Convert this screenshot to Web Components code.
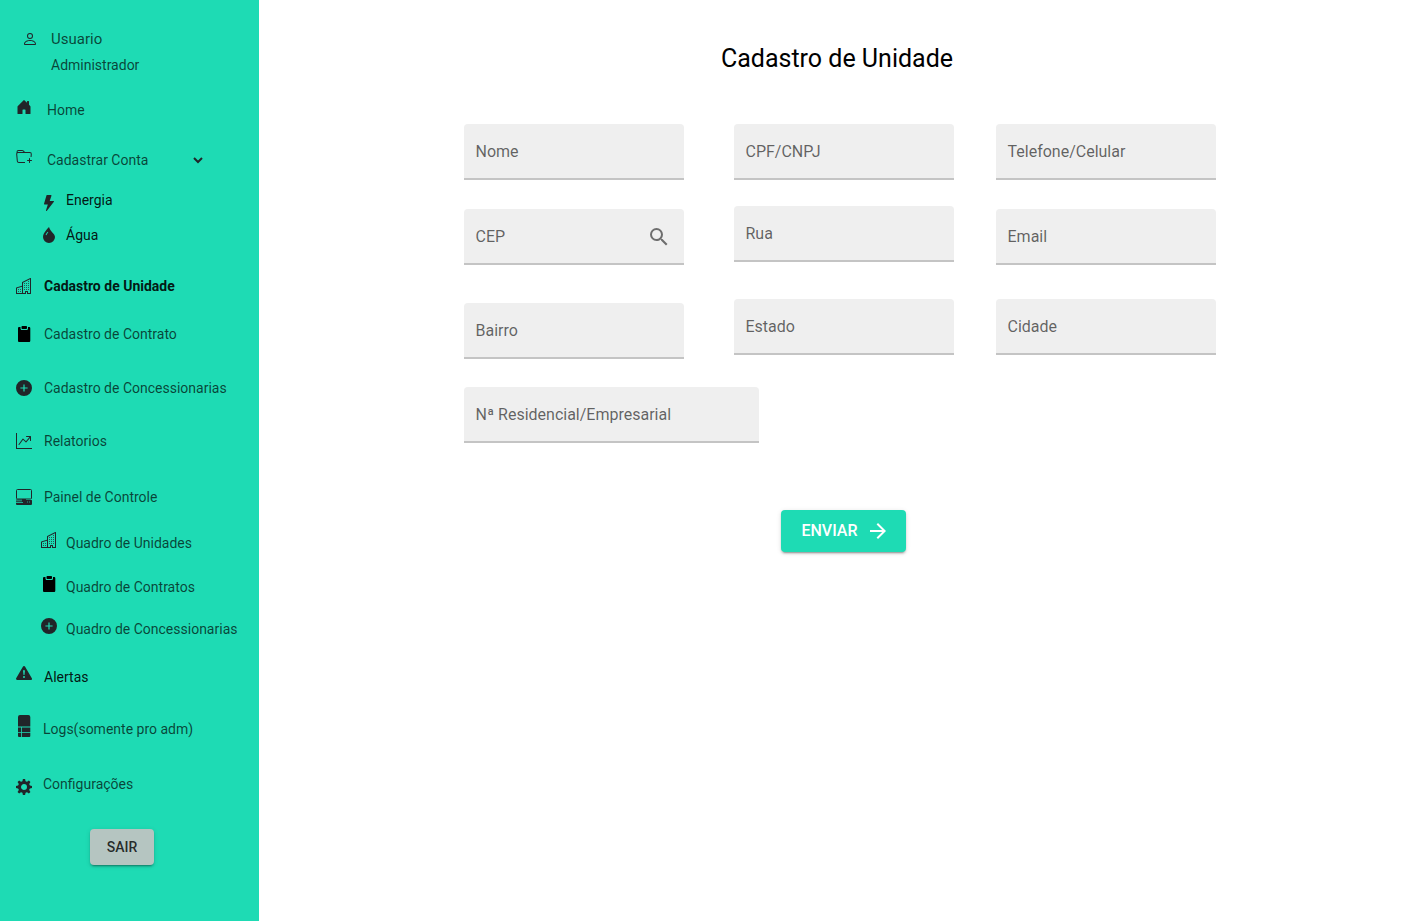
<!DOCTYPE html>
<html lang="pt-BR">
<head>
<meta charset="utf-8">
<title>Cadastro de Unidade</title>
<style>
  body { margin: 0; background: #fff; font-family: Roboto, "Liberation Sans", sans-serif; }
</style>
</head>
<body>
<app-shell>
  <side-bar slot="side">
    <user-card name="Usuario" role-name="Administrador"></user-card>
    <nav-item icon="home" align="start" space="23" indent="15">Home</nav-item>
    <nav-item icon="folder" align="start" space="28" indent="15" expandable>Cadastrar Conta</nav-item>
    <nav-item icon="bolt" align="end" space="18" tone="dark" sub>Energia</nav-item>
    <nav-item icon="drop" space="13" tone="dark" sub>Água</nav-item>
    <nav-item icon="building" space="29" tone="dark" current>Cadastro de Unidade</nav-item>
    <nav-item icon="clipboard" space="26">Cadastro de Contrato</nav-item>
    <nav-item icon="plus" space="32">Cadastro de Concessionarias</nav-item>
    <nav-item icon="chart" space="31">Relatorios</nav-item>
    <nav-item icon="panel" space="34">Painel de Controle</nav-item>
    <nav-item icon="building" align="start" space="24" sub>Quadro de Unidades</nav-item>
    <nav-item icon="clipboard" align="start" space="22" sub>Quadro de Contratos</nav-item>
    <nav-item icon="plus" align="start" space="20" sub>Quadro de Concessionarias</nav-item>
    <nav-item icon="alert" align="start" space="26" tone="dark">Alertas</nav-item>
    <nav-item icon="server" space="30" indent="11">Logs(somente pro adm)</nav-item>
    <nav-item icon="gear" align="end" space="33" indent="11">Configurações</nav-item>
    <app-button slot="footer" variant="neutral">SAIR</app-button>
  </side-bar>
  <unit-form></unit-form>
</app-shell>

<script>
const ICONS = {
  user: ['<path d="M8 8a3 3 0 1 0 0-6 3 3 0 0 0 0 6Zm2-3a2 2 0 1 1-4 0 2 2 0 0 1 4 0Zm4 8c0 1-1 1-1 1H3s-1 0-1-1 1-4 6-4 6 3 6 4Zm-1-.004c-.001-.246-.154-.986-.832-1.664C11.516 10.68 10.289 10 8 10c-2.29 0-3.516.68-4.168 1.332-.678.678-.83 1.418-.832 1.664h10Z"/>'],
  home: ['<path d="M6.5 14.5v-3.505c0-.245.25-.495.5-.495h2c.25 0 .5.25.5.5v3.5a.5.5 0 0 0 .5.5h4a.5.5 0 0 0 .5-.5v-7a.5.5 0 0 0-.146-.354L13 5.793V2.5a.5.5 0 0 0-.5-.5h-1a.5.5 0 0 0-.5.5v1.293L8.354 1.146a.5.5 0 0 0-.708 0l-6 6A.5.5 0 0 0 1.5 7.5v7a.5.5 0 0 0 .5.5h4a.5.5 0 0 0 .5-.5z"/>'],
  folder: ['<path d="m.5 3 .04.87a1.99 1.99 0 0 0-.342 1.311l.637 7A2 2 0 0 0 2.826 14H9v-1H2.826a1 1 0 0 1-.995-.91l-.637-7A1 1 0 0 1 2.19 4h11.62a1 1 0 0 1 .996 1.09L14.54 8h1.005l.256-2.819A2 2 0 0 0 13.81 3H9.828a2 2 0 0 1-1.414-.586l-.828-.828A2 2 0 0 0 6.172 1H2.5a2 2 0 0 0-2 2Zm5.672-1a1 1 0 0 1 .707.293L7.586 3H2.19c-.24 0-.47.042-.683.12L1.5 2.98a1 1 0 0 1 1-.98h3.672ZM13.5 9a.5.5 0 0 1 .5.5V11h1.5a.5.5 0 1 1 0 1H14v1.5a.5.5 0 1 1-1 0V12h-1.5a.5.5 0 0 1 0-1H13V9.5a.5.5 0 0 1 .5-.5z"/>'],
  bolt: ['<path d="M5.52.359A.5.5 0 0 1 6 0h4a.5.5 0 0 1 .474.658L8.694 6H12.5a.5.5 0 0 1 .395.807l-7 9a.5.5 0 0 1-.873-.454L6.823 9.5H3.5a.5.5 0 0 1-.48-.641l2.5-8.5z"/>'],
  drop: ['<path fill-rule="evenodd" d="M8 16a6 6 0 0 0 6-6c0-1.655-1.122-2.904-2.432-4.362C10.254 4.176 8.75 2.503 8 0c0 0-6 5.686-6 10a6 6 0 0 0 6 6ZM6.646 4.646l.708.708c-.29.29-1.128 1.311-1.907 2.87l-.894-.448c.82-1.641 1.717-2.753 2.093-3.13Z"/>'],
  building: ['<path fill-rule="evenodd" d="M14.763.075A.5.5 0 0 1 15 .5v15a.5.5 0 0 1-.5.5h-3a.5.5 0 0 1-.5-.5V14h-1v1.5a.5.5 0 0 1-.5.5h-9a.5.5 0 0 1-.5-.5V10a.5.5 0 0 1 .342-.474L6 7.64V4.5a.5.5 0 0 1 .276-.447l8-4a.5.5 0 0 1 .487.022zM6 8.694 1 10.36V15h5V8.694zM7 15h2v-1.5a.5.5 0 0 1 .5-.5h2a.5.5 0 0 1 .5.5V15h2V1.309l-7 3.5V15z"/><path opacity=".7" d="M2 11h1v1H2v-1zm2 0h1v1H4v-1zm-2 2h1v1H2v-1zm2 0h1v1H4v-1zm4-4h1v1H8V9zm2 0h1v1h-1V9zm-2 2h1v1H8v-1zm2 0h1v1h-1v-1zm2-2h1v1h-1V9zm0 2h1v1h-1v-1zM8 7h1v1H8V7zm2 0h1v1h-1V7zm2 0h1v1h-1V7zM8 5h1v1H8V5zm2 0h1v1h-1V5zm2 0h1v1h-1V5zm0-2h1v1h-1V3z"/>'],
  clipboard: ['<path fill="#000" d="M6.500 0h3.500c.6 0 1 .4 1 1v1c0 .6-.4 1-1 1H6.500c-.6 0-1-.4-1-1V1c0-.6.4-1 1-1zM3.300 1h1.200v1.500C4.500 3.300 5 4 5.800 4h4.900c.8 0 1.300-.7 1.300-1.500V1h1c.8 0 1.300.5 1.300 1.300v12.400c0 .8-.5 1.300-1.300 1.300H3.300c-.8 0-1.300-.5-1.300-1.300V2.300C2 1.500 2.500 1 3.300 1z"/>'],
  plus: ['<path fill-rule="evenodd" d="M16 8A8 8 0 1 1 0 8a8 8 0 0 1 16 0zM8.600 4.400H7.400v3h-3v1.200h3v3h1.200v-3h3V7.400h-3z"/>'],
  chart: ['<path fill-rule="evenodd" d="M0 0h1v15h15v1H0V0Zm10 3.500a.5.5 0 0 1 .5-.5h4a.5.5 0 0 1 .5.5v4a.5.5 0 0 1-1 0V4.900l-3.613 4.417a.5.5 0 0 1-.74.037L7.060 6.767l-3.656 5.027a.5.5 0 0 1-.808-.588l4-5.500a.5.5 0 0 1 .758-.06l2.609 2.610L13.445 4H10.500a.5.5 0 0 1-.5-.5Z"/>'],
  panel: ['<rect x=".5" y=".5" width="15" height="9.500" rx="1" fill="none" stroke="currentColor"/><path d="M6 10h4v1h5.500a.5.500 0 0 1 .5.500V15a1 1 0 0 1-1 1H1a1 1 0 0 1-1-1v-1.200h7v-.8H0v-.8h6v-.8H0V10.600h6z"/><path fill="#1edbb4" opacity=".7" d="M11 12.500h1v1h-1zM13 12.500h1v1h-1z"/>'],
  alert: ['<path d="M8.982.566a1.130 1.130 0 0 0-1.960 0L.165 12.233c-.457.778.091 1.767.980 1.767h13.713c.889 0 1.438-.990.980-1.767L8.982.566zM8 4c.535 0 .954.462.900.995l-.350 3.507a.552.552 0 0 1-1.100 0L7.100 4.995A.905.905 0 0 1 8 4zm.002 6a1 1 0 1 1 0 2 1 1 0 0 1 0-2z"/>'],
  server: ['<path d="M4 0h8.300a2 2 0 0 1 2 2v9.500H2V2a2 2 0 0 1 2-2zM2 12.400h3v4.800H2zM5.800 12.400h8.500v4.800H5.800zM2 18.100h3V22H3a1 1 0 0 1-1-1zM5.800 18.100h8.500V21a1 1 0 0 1-1 1H5.800z"/>', 16, 28],
  gear: ['<circle cx="8" cy="8" r="4.500" fill="none" stroke="currentColor" stroke-width="3"/><g><path id="t" d="M6.300 3 6.900 0h2.200l.6 3zM6.300 13l.6 3h2.200l.6-3zM3 6.300 0 6.900v2.200l3 .6zM13 6.300l3 .6v2.200l-3 .6z"/><path transform="rotate(45 8 8)" d="M6.300 3 6.900 0h2.200l.6 3zM6.300 13l.6 3h2.200l.6-3zM3 6.300 0 6.900v2.200l3 .6zM13 6.300l3 .6v2.200l-3 .6z"/></g>'],
  chevron: ['<path d="M1 3l4 4 4-4" fill="none" stroke="currentColor" stroke-width="2"/>', 10, 10],
  search: ['<path d="M15.500 14h-.790l-.280-.270A6.471 6.471 0 0 0 16 9.500 6.500 6.500 0 1 0 9.500 16c1.610 0 3.090-.590 4.230-1.570l.270.280v.790l5 4.990L20.490 19l-4.990-5zm-6 0C7.010 14 5 11.990 5 9.500S7.010 5 9.500 5 14 7.010 14 9.500 11.990 14 9.500 14z"/>', 24, 24],
  arrow: ['<path d="M12 4l-1.410 1.410L16.170 11H4v2h12.170l-5.580 5.590L12 20l8-8z"/>', 24, 24]
};

const define = (name, render) => customElements.define(name, class extends HTMLElement {
  connectedCallback() {
    if (this.shadowRoot) return;
    this.attachShadow({ mode: 'open' }).innerHTML = render(this);
  }
});

define('app-icon', el => {
  const [body, w = 16, h = 16] = ICONS[el.getAttribute('name')];
  return `<style>:host{display:block;flex:none}svg{display:block;fill:currentColor}</style>
    <svg width="${w}" height="${h}" viewBox="0 0 ${w} ${h}" aria-hidden="true">${body}</svg>`;
});

define('user-card', el => `
  <style>
    :host { display: grid; grid-template-columns: 16px 1fr; column-gap: 13px; row-gap: 4px; align-items: center;
      padding-left: 6px; font-size: 14px; line-height: 22px; color: rgba(0,0,0,.7); }
    app-icon { color: #212529; }
    .name { font-size: 15px; }
    .role { grid-column: 2; }
  </style>
  <app-icon name="user"></app-icon><span class="name">${el.getAttribute('name')}</span>
  <span class="role">${el.getAttribute('role-name')}</span>`);

define('nav-item', el => `
  <style>
    :host { display: block; margin-top: ${el.getAttribute('space')}px; }
    :host([sub]) { padding-left: 25px; }
    a { display: flex; align-items: center; gap: ${el.hasAttribute('sub') ? 9 : el.getAttribute('indent') || 12}px; height: 22px;
      font-size: 14px; line-height: 22px; white-space: nowrap; text-decoration: none; color: rgba(0,0,0,.7); }
    :host([tone=dark]) a { color: rgba(0,0,0,.9); }
    :host([current]) a { font-weight: 700; }
    app-icon { color: #212529; }
    :host([align=start]) .lead { align-self: flex-start; }
    :host([align=end]) .lead { align-self: flex-end; }
    .more { margin-left: 30px; }
  </style>
  <a href="#"${el.hasAttribute('current') ? ' aria-current="page"' : ''}>
    <app-icon class="lead" name="${el.getAttribute('icon')}"></app-icon><span><slot></slot></span>
    ${el.hasAttribute('expandable') ? '<app-icon class="more" name="chevron"></app-icon>' : ''}
  </a>`);

define('app-button', el => `
  <style>
    :host { display: block; }
    button { display: flex; align-items: center; justify-content: center; gap: 8px; width: 100%; height: 36px; padding: 0;
      border: 0; border-radius: 4px; font: 500 14px/20px Roboto, sans-serif; cursor: pointer;
      background: #b5c5c1; color: rgba(0,0,0,.8);
      box-shadow: 0 3px 1px -2px rgba(0,0,0,.2), 0 2px 2px rgba(0,0,0,.14), 0 1px 5px rgba(0,0,0,.12); }
    :host([variant=primary]) button { height: 42px; padding-left: 4px; font-size: 16px; background: #1edbb4; color: #fff; }
  </style>
  <button type="button"><slot></slot>${el.hasAttribute('icon') ? `<app-icon name="${el.getAttribute('icon')}"></app-icon>` : ''}</button>`);

define('side-bar', () => `
  <style>
    :host { display: block; box-sizing: border-box; min-height: calc(100vh - 1px); padding: 28px 16px; background: #1edbb4; }
    footer { width: 64px; margin: 34px 0 0 74px; }
  </style>
  <nav aria-label="Principal"><slot></slot></nav>
  <footer><slot name="footer"></slot></footer>`);

define('text-field', el => `
  <style>
    :host { display: block; position: relative; height: 56px; }
    :host([wide]) { width: calc(100% + 75px); }
    input { display: block; box-sizing: border-box; width: 100%; height: 56px; padding: 16px 12px; outline: 0;
      border: 0; border-bottom: 2px solid #c4c4c4; border-radius: 4px 4px 0 0; background: #efefef;
      font: 16px/24px Roboto, sans-serif; color: rgba(0,0,0,.87); }
    label { position: absolute; left: 12px; top: 16px; font-size: 16px; line-height: 24px; color: rgba(0,0,0,.6); pointer-events: none; }
    input:not(:placeholder-shown) + label { top: 2px; font-size: 12px; line-height: 16px; }
    app-icon { position: absolute; right: 13px; top: 16px; color: rgba(0,0,0,.54); }
  </style>
  <input id="field" type="${el.getAttribute('type') || 'text'}" placeholder=" ">
  <label for="field">${el.getAttribute('label')}</label>
  ${el.hasAttribute('icon') ? `<app-icon name="${el.getAttribute('icon')}"></app-icon>` : ''}`);

define('unit-form', () => `
  <style>
    :host { display: block; padding: 40px 28px 40px 24px; }
    h1 { margin: 0 0 46px; padding-right: 5px; font-size: 25px; line-height: 38px; font-weight: 400; text-align: center; color: #000; }
    form { display: flex; flex-direction: column; align-items: center; }
    .columns { display: flex; width: 100%; justify-content: center; }
    .col { display: grid; flex: 0 1 220px; min-width: 0; align-content: start; align-items: start; }
    .a { grid-template-rows: 85px 94px 84px 56px; margin-right: 50px; }
    .b { grid-template-rows: 82px 93px 56px; margin-right: 42px; }
    .c { grid-template-rows: 85px 90px 56px; }
    app-button { width: 125px; margin: 67px 0 0 8px; }
  </style>
  <h1>Cadastro de Unidade</h1>
  <form>
    <div class="columns">
      <div class="col a">
        <text-field label="Nome"></text-field>
        <text-field label="CEP" icon="search"></text-field>
        <text-field label="Bairro"></text-field>
        <text-field label="Nª Residencial/Empresarial" wide></text-field>
      </div>
      <div class="col b">
        <text-field label="CPF/CNPJ"></text-field>
        <text-field label="Rua"></text-field>
        <text-field label="Estado"></text-field>
      </div>
      <div class="col c">
        <text-field label="Telefone/Celular" type="tel"></text-field>
        <text-field label="Email" type="email"></text-field>
        <text-field label="Cidade"></text-field>
      </div>
    </div>
    <app-button variant="primary" icon="arrow">ENVIAR</app-button>
  </form>`);

define('app-shell', () => `
  <style>
    :host { display: grid; grid-template-columns: 259px minmax(0, 1fr); align-items: start; }
  </style>
  <aside><slot name="side"></slot></aside>
  <main><slot></slot></main>`);
</script>
</body>
</html>
